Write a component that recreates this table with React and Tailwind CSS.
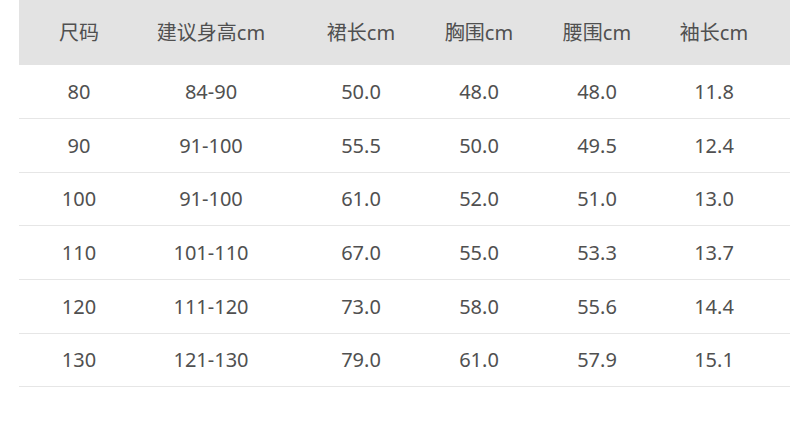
const head = ["尺码", "建议身高cm", "裙长cm", "胸围cm", "腰围cm", "袖长cm"];

const rows = [
  ["80", "84-90", "50.0", "48.0", "48.0", "11.8"],
  ["90", "91-100", "55.5", "50.0", "49.5", "12.4"],
  ["100", "91-100", "61.0", "52.0", "51.0", "13.0"],
  ["110", "101-110", "67.0", "55.0", "53.3", "13.7"],
  ["120", "111-120", "73.0", "58.0", "55.6", "14.4"],
  ["130", "121-130", "79.0", "61.0", "57.9", "15.1"],
];

// row heights taken from the separator lines (some rows are 1px shorter)
const heights = ["h-[54px]", "h-[54px]", "h-[53px]", "h-[54px]", "h-[54px]", "h-[53px]"];

const cols = "grid grid-cols-[120px_163px_118px_118px_118px_116px]";

export default function App() {
  return (
    <div
      className="w-[790px] h-[431px] bg-white pl-[19px] text-[20px] text-[#505050]"
      style={{ fontFamily: '"Noto Sans", "Noto Sans CJK SC", sans-serif' }}
    >
      <div className={cols + " h-[65px] items-center bg-[#e3e3e3]"}>
        {head.map((h, i) => (
          <div key={i} className={i === 1 ? "text-center pr-[19px]" : "text-center"}>
            {h}
          </div>
        ))}
      </div>
      {rows.map((r, j) => (
        <div key={j} className={cols + " " + heights[j] + " items-center border-b border-[#e6e6e6]"}>
          {r.map((c, i) => (
            <div key={i} className={i === 1 ? "text-center pr-[19px]" : "text-center"}>
              {c}
            </div>
          ))}
        </div>
      ))}
    </div>
  );
}
